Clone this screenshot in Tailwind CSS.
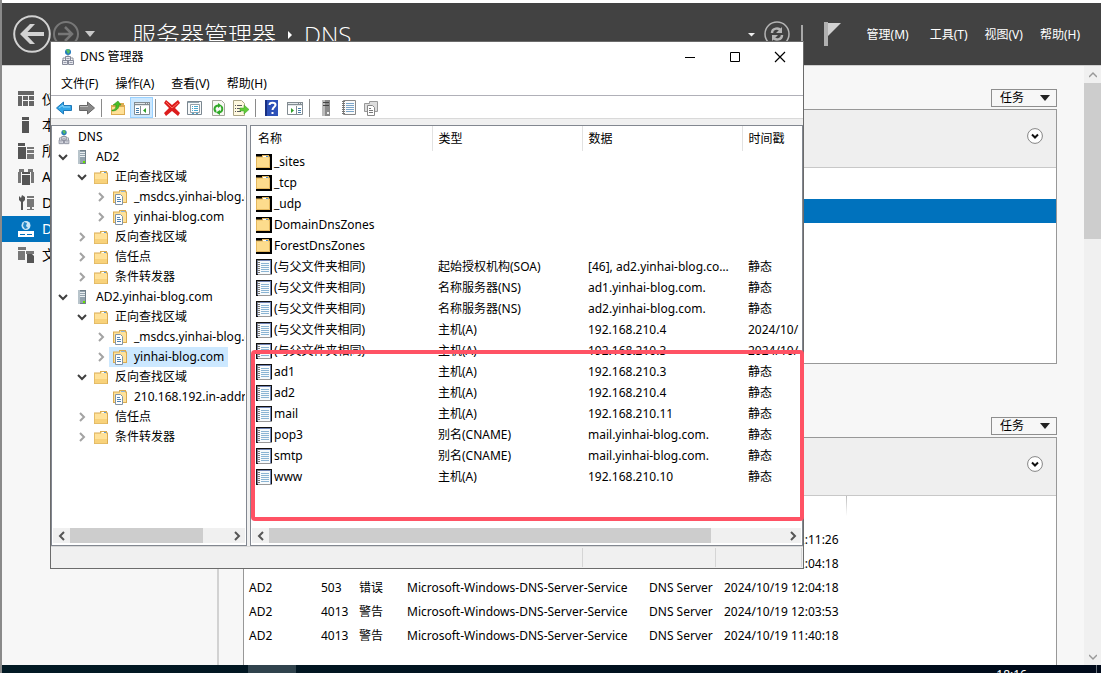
<!DOCTYPE html>
<html lang="zh-CN">
<head>
<meta charset="utf-8">
<title>DNS 管理器</title>
<script src="https://cdn.jsdelivr.net/npm/@tailwindcss/browser@4"></script>
</head>
<body class="h-screen overflow-hidden bg-white text-xs leading-4 text-black font-['Noto_Sans','Noto_Sans_CJK_SC',sans-serif]">

<svg class="hidden" aria-hidden="true">
  <symbol id="folder" viewBox="0 0 16 16"><path d="M1 3.500h6V2h7v1.500h1V15H1z" fill="#d9ab53"/><path d="M2 4.500h6V3h5v1.500h1V14H2z" fill="#ffe29a"/><path d="M2 10h12v4H2z" fill="#f8d27b"/><path d="M9 3.500h4" stroke="#fff"/><path d="M11 3.500h2" stroke="#5b9bd5"/><path d="M1.500 4v10.500h13" fill="none" stroke="#e5bd68"/></symbol>
  <symbol id="zone" viewBox="0 0 16 16"><path d="M1 2.500h6V1h7v1.500h1V14H1z" fill="#d9ab53"/><path d="M2 3.500h6V2h5v1.500h1V13H2z" fill="#ffe29a"/><path d="M9 2.500h4" stroke="#8fb7da"/><path d="M3.500 5.500h5l2 2v8h-7z" fill="#fff" stroke="#8294a6"/><path d="M5 8.500h3m-3 2h4m-4 2h4" stroke="#4f83b8"/></symbol>
  <symbol id="folder-mask" viewBox="0 0 16 16"><path d="M0 0h16v16H0z"/><path d="M0 2.500h6V1h7v1.500h1V14H0z" fill="#e4b75e"/><path d="M1 3.500h6V2h5v1.500h1V13H1z" fill="#fddc8d"/><path d="M7 2.500h5" stroke="#fff"/><path d="M10 2.500h2" stroke="#4c8fd4"/></symbol>
  <symbol id="record" viewBox="0 0 16 16"><path d="M0 0h16v16H0z" fill="#111"/><path d="M1 1h14v14H1z" fill="#7184b4"/><path d="M2 2h12v13H2z" fill="#f7fafc"/><path d="M5 4.500h8m-8 2h8m-8 2h8m-8 2h8m-8 2h8" stroke="#8ab4d3"/><path d="M2.500 1v14" stroke="#777" stroke-width="3" stroke-dasharray="1 1"/><path d="M2 15.500h14" stroke="#999"/></symbol>
  <symbol id="server" viewBox="0 0 16 16"><path d="M4 1h8v14H4z" fill="#71808a"/><path d="M4 1h2v14H4z" fill="#b8c4cb"/><path d="M6 2h5v12H6z" fill="#94a4ae"/><path d="M6 3.500h5m-5 2h5m-5 2h5" stroke="#e9eef1"/><path d="M9 12h2v2H9z" fill="#64e000"/></symbol>
  <symbol id="dns" viewBox="0 0 16 18"><circle cx="8" cy="4" r="3" fill="#247bbd"/><path d="M6 2l3-1 1 3-2 2-1-2z" fill="#58bd5d"/><path d="M8 7v3M3 13v-3h10v3" fill="none" stroke="#8b919c"/><path d="M5.500 8.500h5v4h-5zm-3 4h5v4h-5zm6 0h5v4h-5z" fill="#e6e8ee" stroke="#858998"/><path d="M6.500 10.500h3m-6 4h3m3 0h3" stroke="#9a9dac"/></symbol>
  <symbol id="down" viewBox="0 0 10 10"><path d="M1 3l4 4 4-4" fill="none" stroke="#404040" stroke-width="2"/></symbol>
  <symbol id="right" viewBox="0 0 10 10"><path d="M3 1l4 4-4 4" fill="none" stroke="#a3a3a3" stroke-width="2"/></symbol>
  <symbol id="sb-left" viewBox="0 0 10 10"><path d="M7 1L3 5l4 4" fill="none" stroke="#555" stroke-width="2"/></symbol>
  <symbol id="sb-right" viewBox="0 0 10 10"><path d="M3 1l4 4-4 4" fill="none" stroke="#555" stroke-width="2"/></symbol>
  <symbol id="expand" viewBox="0 0 16 16"><circle cx="8" cy="8" r="7.400" fill="#fff" stroke="#858585"/><path d="M5 6.500l3 3 3-3" fill="none" stroke="#111" stroke-width="2"/></symbol>
</svg>

<div class="relative flex h-full flex-col border-l-2 border-[#8a8a8a] pt-[3px]">

  <header class="flex h-[62px] shrink-0 items-center bg-[#424242] pl-[11px] pr-[21px] text-white">
    <button aria-label="后退" class="h-[38px] w-[38px]"><svg viewBox="0 0 38 38"><circle cx="19" cy="19" r="17.800" fill="none" stroke="#d2d2d2" stroke-width="2"/><path d="M7 19l10-10h5l-7.500 8H31v4H14.500l7.500 8h-5z" fill="#d2d2d2"/></svg></button>
    <button aria-label="前进" class="ml-[2px] h-[26px] w-[26px]"><svg viewBox="0 0 26 26"><circle cx="13" cy="13" r="12" fill="none" stroke="#777" stroke-width="2"/><path d="M5 13h14M12 6l7 7-7 7" fill="none" stroke="#777" stroke-width="2.500"/></svg></button>
    <button aria-label="历史记录" class="ml-[5px] h-3 w-3"><svg viewBox="0 0 12 12"><path d="M1 3h10L6 9z" fill="#c8c8c8"/></svg></button>
    <h1 class="ml-9 flex items-center pt-px text-2xl font-light font-['Open_Sans','Noto_Sans_CJK_SC',sans-serif]"><span>服务器管理器</span><svg class="mx-[10px] h-2 w-2" viewBox="0 0 8 8"><path d="M2 0l4 4-4 4z" fill="#fff"/></svg><span>DNS</span></h1>
    <div class="ml-auto flex items-center">
      <button aria-label="更多" class="h-2 w-2"><svg viewBox="0 0 8 8"><path d="M1 3h7L4.500 6.500z" fill="#eee"/></svg></button>
      <button aria-label="刷新" class="ml-[9px] h-[26px] w-[26px]"><svg viewBox="0 0 26 26" fill="none" stroke="#b5b5b5"><circle cx="13" cy="13" r="12" stroke-width="1.500"/><path d="M8 12c0-5 7-6 9-2M18 14c0 5-7 6-9 2" stroke-width="2.500"/><path d="M18 6v6h-6zM8 20v-6h6z" fill="#b5b5b5" stroke="none"/></svg></button>
      <span class="ml-[11px] h-[18px] w-[2px] bg-[#a8a8a8]"></span>
      <button aria-label="通知" class="ml-[21px] h-6 w-[18px]"><svg viewBox="0 0 18 24"><path d="M0 0h4v24H0z" fill="#b0b0b0"/><path d="M4 1h13L4 14z" fill="#d0d0d0"/></svg></button>
      <nav class="ml-[25px] flex gap-[17px] pt-px"><button class="mr-1">管理(M)</button><button>工具(T)</button><button>视图(V)</button><button>帮助(H)</button></nav>
    </div>
  </header>

  <div class="flex min-h-0 flex-1 border-t border-[#d0d0d0] bg-[#f7f7f7]">
    <nav class="w-[217px] shrink-0 border-r-2 border-[#d2d2d2] pt-5 text-sm">
      <a href="#" class="flex h-[26px] items-center gap-2 pl-4"><svg class="h-4 w-4" viewBox="0 0 16 16" fill="#666"><path d="M0 0h16v4H0zM0 5h4v10H0zM5 5h5v4H5zM11 5h5v4h-5zM5 10h5v5H5zM11 10h5v5h-5z"/></svg>仪表板</a>
      <a href="#" class="flex h-[26px] items-center gap-2 pl-4"><svg class="h-4 w-4" viewBox="0 0 16 16" fill="#555"><path d="M4 0h7v3H4zM4 4h7v12H4z"/></svg>本地服务器</a>
      <a href="#" class="flex h-[26px] items-center gap-2 pl-4"><svg class="h-4 w-4" viewBox="0 0 16 16" fill="#555"><path d="M0 0h7v3H0zM0 4h8v12H0z"/><path d="M9 4h7v2H9zM9 7h7v3H9zM9 11h7v5H9z" fill="#777"/></svg>所有服务器</a>
      <a href="#" class="flex h-[26px] items-center gap-2 pl-4"><svg class="h-4 w-4" viewBox="0 0 16 16" fill="#777"><path d="M1 0h5v3H3v11H0V3h1zM10 0h5v3h1v11h-3V3h-3z"/><path d="M4 3h8v2H4zM4 6h8v10H4z" fill="#555"/></svg>AD DS</a>
      <a href="#" class="flex h-[26px] items-center gap-2 pl-4"><svg class="h-4 w-4" viewBox="0 0 16 16" fill="#555"><path d="M1 1l2 2 1-3 3 2v3L5 7v8H3V7L1 5z"/><path d="M9 1h7v2H9zM9 4h7v8H9zM12 12h2v2h2v1H9v-1h3z" fill="#777"/></svg>DHCP</a>
      <a href="#" aria-current="page" class="flex h-[26px] items-center gap-2 bg-[#0072bd] pl-4 text-white"><svg class="h-4 w-4" viewBox="0 0 16 16" fill="#fff"><circle cx="8" cy="4.500" r="4.500" fill="#cce6f5"/><path d="M6 1l3 1-1 3 2 2-3 1-2-3z" fill="#2486c5"/><path d="M0 10h16v6H0z"/><path d="M2 13h5v1H2zM9 13h5v1H9z" fill="#0072bd"/></svg>DNS</a>
      <a href="#" class="flex h-[26px] items-center gap-2 pl-4"><svg class="h-4 w-4" viewBox="0 0 16 16" fill="#777"><path d="M0 0h8v3H0zM0 4h7v9H0zM8 4h8v3H8z"/><path d="M9 7h5l2 2v7H9z" fill="#555"/></svg><span class="truncate">文件和存储服务</span></a>
    </nav>

    <main class="flex min-w-0 flex-1 flex-col overflow-hidden pl-6 pr-[27px] pt-[23px]">
      <button class="flex h-[18px] w-[66px] shrink-0 items-center justify-between self-end border border-[#8e8e8e] pl-2 pr-[5px]">任务<svg class="h-3 w-3" viewBox="0 0 12 12"><path d="M1 3h10L6 9z" fill="#222"/></svg></button>
      <section class="mt-[2px] h-[255px] shrink-0 border border-[#989898] bg-white">
        <div class="flex h-[58px] items-center justify-end border-b border-[#c8c8c8] bg-[#efefef] pb-[6px] pr-[13px]"><button aria-label="展开" class="h-4 w-4"><svg viewBox="0 0 16 16"><use href="#expand"/></svg></button></div>
        <div class="mt-[31px] h-6 bg-[#0072bd]"></div>
      </section>
      <button class="mt-[53px] flex h-[18px] w-[66px] shrink-0 items-center justify-between self-end border border-[#8e8e8e] pl-2 pr-[5px]">任务<svg class="h-3 w-3" viewBox="0 0 12 12"><path d="M1 3h10L6 9z" fill="#222"/></svg></button>
      <section class="mt-[2px] min-h-0 flex-1 border border-b-0 border-[#989898] bg-white">
        <div class="flex h-[58px] items-center justify-end border-b border-[#c8c8c8] bg-[#efefef] pb-[6px] pr-[13px]"><button aria-label="展开" class="h-4 w-4"><svg viewBox="0 0 16 16"><use href="#expand"/></svg></button></div>
        <div class="flex h-8"><span class="w-[602px]"></span><span class="h-5 w-px bg-linear-to-b from-[#bbb] to-white"></span></div>
        <table class="w-[602px] table-fixed whitespace-nowrap text-left">
          <colgroup><col class="w-[77px]"><col class="w-[38px]"><col class="w-[48px]"><col class="w-[242px]"><col class="w-[75px]"><col></colgroup>
          <tbody id="events"></tbody>
        </table>
      </section>
    </main>

    <div class="flex w-[17px] shrink-0 flex-col bg-[#f0f0f0]">
      <button aria-label="向上滚动" class="flex h-[17px] items-center justify-center"><svg class="h-2 w-2" viewBox="0 0 8 8"><path d="M0 6l4-4 4 4" fill="none" stroke="#999" stroke-width="1.500"/></svg></button>
      <div class="h-[156px] bg-[#cdcdcd]"></div>
      <button aria-label="向下滚动" class="mt-auto flex h-[17px] items-center justify-center"><svg class="h-2 w-2" viewBox="0 0 8 8"><path d="M0 2l4 4 4-4" fill="none" stroke="#999" stroke-width="1.500"/></svg></button>
    </div>
  </div>

  <footer class="flex h-2 shrink-0 overflow-hidden bg-linear-to-r from-[#021a24] to-[#000a1a] pr-1 text-white">
    <span class="ml-[246px] w-12 bg-[#30434d]"></span>
    <time class="ml-auto border-r border-[#68717b] pr-[69px] pt-[2px]">18:16</time>
  </footer>

  <!-- DNS manager window -->
  <div class="absolute left-[48px] top-[41px] flex h-[528px] w-[754px] flex-col border border-[#6b6b6b] bg-[#f0f0f0]">
    <div class="flex h-7 shrink-0 items-center bg-white pl-[9px] pr-[15px] pt-px">
      <svg class="h-[18px] w-4" viewBox="0 0 16 18"><use href="#dns"/></svg>
      <h2 class="ml-1">DNS 管理器</h2>
      <div class="ml-auto flex gap-[29px]">
        <button aria-label="最小化" class="h-4 w-4"><svg viewBox="0 0 16 16"><path d="M3 8.500h10" stroke="#000"/></svg></button>
        <button aria-label="最大化" class="h-4 w-4"><svg viewBox="0 0 16 16"><path d="M3.500 3.500h9v9h-9z" fill="none" stroke="#000"/></svg></button>
        <button aria-label="关闭" class="h-4 w-4"><svg viewBox="0 0 16 16"><path d="M3 3l10 10M13 3L3 13" stroke="#000" stroke-width="1.200"/></svg></button>
      </div>
    </div>
    <nav class="flex h-[26px] shrink-0 items-center gap-[17px] border-b border-[#b0b0b8] bg-white pl-[10px] pt-[2px]"><button>文件(F)</button><button>操作(A)</button><button>查看(V)</button><button>帮助(H)</button></nav>
    <div class="flex h-[23px] shrink-0 items-center border-b border-[#d9d9d9] bg-white pl-[5px] pt-px">
      <button aria-label="后退" class="h-4 w-4"><svg viewBox="0 0 16 16"><path d="M.500 8l7-6v3.500h8v5h-8V14z" fill="#2fa5e8" stroke="#2078b8"/><path d="M3 8l4-3v2h7" fill="none" stroke="#90d8fa"/></svg></button>
      <button aria-label="前进" class="ml-[7px] h-4 w-4"><svg viewBox="0 0 16 16"><path d="M15.500 8l-7-6v3.500h-8v5h8V14z" fill="#8a8a8a" stroke="#666"/><path d="M1 6.500h8" stroke="#bbb"/></svg></button>
      <span class="ml-[6px] h-[18px] w-px bg-[#8a8a8a]"></span>
      <button aria-label="上一级" class="ml-2 h-4 w-4"><svg viewBox="0 0 16 16"><path d="M1 5h6l1-2h6v2h1v10H1z" fill="#dcab50"/><path d="M2 7h12v7H2z" fill="#ffe096"/><path d="M2 10c3 0 4-2 4-5H3l5-4 3 4H9c0 4-3 6-7 6z" fill="#48bd26" stroke="#2a8c18" stroke-width=".5"/></svg></button>
      <button aria-label="显示控制台树" class="ml-1 flex h-[21px] w-[23px] items-center justify-center border border-[#99d1ff] bg-[#cce8ff]"><svg class="h-4 w-4" viewBox="0 0 16 16"><path d="M.500 2.500h15v12H.500z" fill="#fff" stroke="#838c92"/><path d="M0 2h16v4H0z" fill="#838c92"/><path d="M1 3.500h10m1 0h1m1 0h1M1 5.500h14" stroke="#e1e6e9"/><path d="M6.500 6v9" stroke="#838c92"/><path d="M2 8.500h3m-3 2h3m-3 2h3" stroke="#447ca8"/><path d="M12 8v5l-3-2.500z" fill="#2f9f28"/></svg></button>
      <span class="ml-[2px] h-[18px] w-px bg-[#8a8a8a]"></span>
      <button aria-label="删除" class="ml-2 h-4 w-4"><svg viewBox="0 0 16 16"><path d="M2 0l6 5 6-5 2 3-5 5 5 5-2 3-6-5-6 5-2-3 5-5-5-5z" fill="#dc1c1c"/><path d="M2 2l6 6 6-5" fill="none" stroke="#ff7062"/></svg></button>
      <button aria-label="属性" class="ml-[7px] h-4 w-4"><svg viewBox="0 0 16 16"><path d="M.500 1.500h14v13H.500z" fill="#f7f9fa" stroke="#7b8790"/><path d="M1 2.500h11" stroke="#93a6b0"/><path d="M3.500 4.500h9v8h-9z" fill="#fff" stroke="#94a1aa"/><path d="M5 6.500h1m1 0h4m-6 2h1m1 0h4m-6 2h1m1 0h4M5 13.500h2m2 0h2" stroke="#49a8cf"/></svg></button>
      <button aria-label="刷新" class="ml-2 h-4 w-4"><svg viewBox="0 0 16 16"><path d="M1.500.500h9l3 3v12h-12z" fill="#f8f8f4" stroke="#a4a49a"/><path d="M5 12C2 9 4 5.500 7.500 5.500M8 12.500c4-.5 4-5 2-6.500" fill="none" stroke="#31a928" stroke-width="2"/><path d="M7 3l3.500 2.500L7 8zM9 10v5l-4-2.500z" fill="#31a928"/></svg></button>
      <button aria-label="导出列表" class="ml-[6px] h-4 w-4"><svg viewBox="0 0 16 16"><path d="M.500.500h8l3 3v12H.500z" fill="#fff9df" stroke="#aaa484"/><path d="M2 5.500h1m1 0h5m-7 3h1m1 0h4m-6 3h1m1 0h4" stroke="#58585e"/><path d="M7 8h4V5l5 4.500-5 4.500v-3H7z" fill="#61cb38" stroke="#3b9e25" stroke-width=".5"/></svg></button>
      <span class="ml-[6px] h-[18px] w-px bg-[#8a8a8a]"></span>
      <button aria-label="帮助" class="ml-2 h-4 w-4"><svg viewBox="0 0 16 16"><path d="M1 0h13v16H1z" fill="#2d51b8"/><path d="M1 0h2v16H1z" fill="#182f82"/><path d="M5.500 5c0-3 6-3 6 0 0 2-3 2-3 5m0 2v2" fill="none" stroke="#fff" stroke-width="2"/></svg></button>
      <button aria-label="显示操作窗格" class="ml-[7px] h-4 w-4"><svg viewBox="0 0 16 16"><path d="M.500 2.500h15v12H.500z" fill="#fff" stroke="#838c92"/><path d="M0 2h16v4H0z" fill="#838c92"/><path d="M1 3.500h10m1 0h1m1 0h1M1 5.500h14" stroke="#e1e6e9"/><path d="M9.500 6v9" stroke="#838c92"/><path d="M11 8.500h3m-3 2h3m-3 2h3" stroke="#447ca8"/><path d="M4 8v5l3-2.500z" fill="#2f9f28"/></svg></button>
      <span class="ml-[6px] h-[18px] w-px bg-[#8a8a8a]"></span>
      <button aria-label="服务器" class="ml-2 h-4 w-4"><svg viewBox="0 0 16 16"><path d="M4 0h8v16H4z" fill="#8a8a8a"/><path d="M4 0h3v16H4z" fill="#bcbcbc"/><path d="M5 2.500h6m-6 3h6" stroke="#444"/><path d="M9 12h2v2H9z" fill="#eee"/></svg></button>
      <button aria-label="新建记录" class="ml-[7px] h-4 w-4"><svg viewBox="0 0 16 16"><path d="M2.500.500h12v14h-12z" fill="#fafafa" stroke="#888"/><path d="M5 3.500h8m-8 2h8m-8 2h8m-8 2h8m-8 2h8" stroke="#7ba5c9"/><path d="M2.500 1v14" stroke="#777" stroke-width="3" stroke-dasharray="1 1"/></svg></button>
      <button aria-label="新建区域" class="ml-[6px] h-4 w-4"><svg viewBox="0 0 16 16"><path d="M1.500 3.500h5v-2h8v10h-13z" fill="#ddd" stroke="#999"/><path d="M4.500 5.500h5l2 2v8h-7z" fill="#fff" stroke="#888"/><path d="M6 8.500h2m-2 2h4m-4 2h4" stroke="#777"/></svg></button>
    </div>

    <div class="flex min-h-0 flex-1 gap-[3px] pt-[6px]">
      <div class="flex w-[196px] shrink-0 flex-col border border-[#828790] bg-white">
        <ul id="tree" class="mr-px min-h-0 flex-1 overflow-hidden whitespace-nowrap pt-px"></ul>
        <div class="mx-px mb-[2px] flex h-[15px] shrink-0 bg-[#f0f0f0]">
          <button aria-label="向左滚动" class="flex w-[17px] items-center justify-center"><svg class="h-2.5 w-2.5"><use href="#sb-left"/></svg></button>
          <div class="w-[133px] bg-[#cdcdcd]"></div>
          <button aria-label="向右滚动" class="ml-auto flex w-[17px] items-center justify-center"><svg class="h-2.5 w-2.5"><use href="#sb-right"/></svg></button>
        </div>
      </div>
      <div class="flex min-w-0 flex-1 flex-col border border-[#828790] bg-white">
        <div class="mr-px min-h-0 flex-1 overflow-hidden">
          <table class="w-full table-fixed whitespace-nowrap text-left">
            <colgroup><col class="w-[181px]"><col class="w-[150px]"><col class="w-[160px]"><col></colgroup>
            <thead><tr class="h-[25px]"><th class="border-r border-[#e2e2e2] p-0 pl-[7px] font-normal">名称</th><th class="border-r border-[#e2e2e2] p-0 pl-[6px] font-normal">类型</th><th class="border-r border-[#e2e2e2] p-0 pl-[6px] font-normal">数据</th><th class="p-0 pl-[6px] font-normal">时间戳</th></tr></thead>
            <tbody id="records"></tbody>
          </table>
        </div>
        <div class="mx-px mb-[2px] flex h-[15px] shrink-0 bg-[#f0f0f0]">
          <button aria-label="向左滚动" class="flex w-[17px] items-center justify-center"><svg class="h-2.5 w-2.5"><use href="#sb-left"/></svg></button>
          <div class="w-[442px] bg-[#cdcdcd]"></div>
          <button aria-label="向右滚动" class="ml-auto flex w-[17px] items-center justify-center"><svg class="h-2.5 w-2.5"><use href="#sb-right"/></svg></button>
        </div>
      </div>
    </div>
    <div class="flex h-[22px] shrink-0 justify-end border-t border-[#d7d7d7] py-px pr-px"><span class="w-[133px] border-l border-[#d5d5d5]"></span><span class="w-[87px] border-x border-[#d5d5d5]"></span></div>
  </div>

  <!-- highlight around the new host records -->
  <div class="pointer-events-none absolute left-[249px] top-[350px] h-[171px] w-[553px] rounded-[4px] border-4 border-[#ff5264]"></div>
</div>

<script>
const tree = [
  [0, '', 'dns', 'DNS'],
  [1, 'down', 'server', 'AD2'],
  [2, 'down', 'folder', '正向查找区域'],
  [3, 'right', 'zone', '_msdcs.yinhai-blog.com'],
  [3, 'right', 'zone', 'yinhai-blog.com'],
  [2, 'right', 'folder', '反向查找区域'],
  [2, 'right', 'folder', '信任点'],
  [2, 'right', 'folder', '条件转发器'],
  [1, 'down', 'server', 'AD2.yinhai-blog.com'],
  [2, 'down', 'folder', '正向查找区域'],
  [3, 'right', 'zone', '_msdcs.yinhai-blog.com'],
  [3, 'right', 'zone', 'yinhai-blog.com', true],
  [2, 'down', 'folder', '反向查找区域'],
  [3, '', 'zone', '210.168.192.in-addr.arpa'],
  [2, 'right', 'folder', '信任点'],
  [2, 'right', 'folder', '条件转发器'],
];
const indent = ['pl-[1px]', 'pl-[6px]', 'pl-[25px]', 'pl-[44px]'];
document.getElementById('tree').innerHTML = tree.map(([level, arrow, icon, label, selected]) => `
  <li class="flex h-5 items-center ${indent[level]}">
    ${level ? `<svg class="mr-[3px] h-2.5 w-2.5 shrink-0">${arrow ? `<use href="#${arrow}"/>` : ''}</svg>` : ''}
    <span class="flex h-5 items-center gap-[6px] pl-[3px] pr-1 ${selected ? 'bg-[#cce8ff]' : ''}"><svg class="h-4 w-4 shrink-0"><use href="#${icon}"/></svg>${label}</span>
  </li>`).join('');

const same = '(与父文件夹相同)';
const records = [
  ['_sites'], ['_tcp'], ['_udp'], ['DomainDnsZones'], ['ForestDnsZones'],
  [same, '起始授权机构(SOA)', '[46], ad2.yinhai-blog.com., hostmaster', '静态'],
  [same, '名称服务器(NS)', 'ad1.yinhai-blog.com.', '静态'],
  [same, '名称服务器(NS)', 'ad2.yinhai-blog.com.', '静态'],
  [same, '主机(A)', '192.168.210.4', '2024/10/19'],
  [same, '主机(A)', '192.168.210.3', '2024/10/19'],
  ['ad1', '主机(A)', '192.168.210.3', '静态'],
  ['ad2', '主机(A)', '192.168.210.4', '静态'],
  ['mail', '主机(A)', '192.168.210.11', '静态'],
  ['pop3', '别名(CNAME)', 'mail.yinhai-blog.com.', '静态'],
  ['smtp', '别名(CNAME)', 'mail.yinhai-blog.com.', '静态'],
  ['www', '主机(A)', '192.168.210.10', '静态'],
];
document.getElementById('records').innerHTML = records.map(([name, type = '', data = '', stamp = '']) => `
  <tr class="h-[21px]">
    <td class="p-0 pl-[5px]"><span class="flex items-center gap-[2px]"><svg class="h-4 w-4"><use href="#${type ? 'record' : 'folder-mask'}"/></svg>${name}</span></td>
    <td class="p-0 pl-[6px]">${type}</td>
    <td class="truncate p-0 pl-[6px] pr-2">${data}</td>
    <td class="p-0 pl-[6px] pr-[2px]"><div class="overflow-hidden">${stamp}</div></td>
  </tr>`).join('');

const source = 'Microsoft-Windows-DNS-Server-Service';
const events = [
  ['AD2', '', '', source, 'DNS Server', '2024/10/19 12:11:26'],
  ['AD2', '', '错误', source, 'DNS Server', '2024/10/19 12:04:18'],
  ['AD2', '503', '错误', source, 'DNS Server', '2024/10/19 12:04:18'],
  ['AD2', '4013', '警告', source, 'DNS Server', '2024/10/19 12:03:53'],
  ['AD2', '4013', '警告', source, 'DNS Server', '2024/10/19 11:40:18'],
];
document.getElementById('events').innerHTML = events.map(row => `
  <tr class="h-6">${row.map((cell, i) => `<td class="${i ? 'p-0' : 'p-0 pl-[5px]'}">${cell}</td>`).join('')}</tr>`).join('');
</script>
</body>
</html>
